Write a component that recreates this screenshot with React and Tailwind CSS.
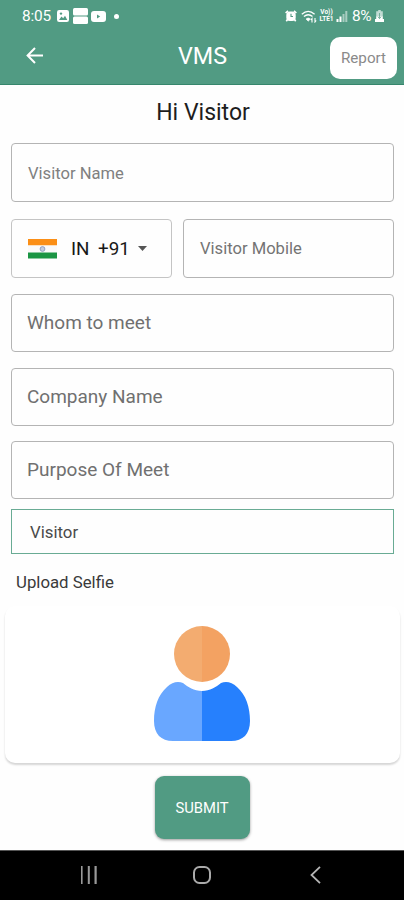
import React from "react";

const StatusBar = () => (
  <div className="flex h-8 items-center justify-between pl-[22px] pr-[20px] text-white">
    <div className="flex items-center">
      <span className="w-[35px] pt-px text-[15.4px] leading-none tracking-[-0.2px]">8:05</span>
      <svg width="12" height="12" viewBox="0 0 12 12">
        <rect width="12" height="12" rx="2.2" fill="#fff" />
        <path d="M2 10 L4.5 6.5 L6.2 8.3 L8 5.8 L10.3 10Z" fill="#519b83" />
        <circle cx="4" cy="3.6" r="1.2" fill="#519b83" />
      </svg>
      <svg className="ml-1" width="15" height="16" viewBox="0 0 15 16">
        <rect width="15" height="7.5" rx="1.5" fill="#fff" />
        <rect y="8.5" width="15" height="7.5" rx="1.5" fill="#fff" />
      </svg>
      <svg className="ml-[3px]" width="15" height="11" viewBox="0 0 15 11">
        <rect width="15" height="11" rx="3" fill="#fff" />
        <path d="M6 3.6 L9.2 5.5 L6 7.4Z" fill="#519b83" />
      </svg>
      <span className="ml-[8px] h-[5px] w-[5px] rounded-full bg-white" />
    </div>
    <div className="flex items-center">
      <svg width="12" height="12" viewBox="0 0 12 12">
        <rect x="1.3" y="1.6" width="9.4" height="9.4" rx="3.5" fill="#fff" />
        <path d="M0.6 3 L3 0.8 M11.4 3 L9 0.8 M2.5 9.5 L1.3 11.3 M9.5 9.5 L10.7 11.3" stroke="#fff" strokeWidth="1.6" />
        <path d="M6 3.8 V6.5 H8" fill="none" stroke="#519b83" strokeWidth="1.1" />
      </svg>
      <svg className="ml-1" width="16" height="13" viewBox="0 0 16 13" fill="none" stroke="#fff">
        <path d="M0.8 4.2 Q7.2 -1.4 13.6 4.2" strokeWidth="1.3" />
        <path d="M2.9 6.6 Q7.2 2.8 11.5 6.6" strokeWidth="1.3" />
        <path d="M5 9 Q7.2 7 9.4 9 L7.2 11.2Z" fill="#fff" strokeWidth="0.6" />
        <path d="M11 12.5 V8.5 L9.8 10 M14 8 V12 L15.2 10.5" strokeWidth="1.1" />
      </svg>
      <span className="ml-px flex w-[17px] flex-col items-center text-[6.5px] font-bold leading-[7px]">
        <span>Vo))</span>
        <span>LTE1</span>
      </span>
      <svg className="ml-px" width="12" height="11" viewBox="0 0 12 11" fill="#fff">
        <rect x="0.5" y="8" width="2" height="3" />
        <rect x="3.5" y="5.5" width="2" height="5.5" />
        <rect x="6.5" y="3" width="2" height="8" opacity="0.5" />
        <rect x="9.3" y="0" width="2" height="11" opacity="0.5" />
      </svg>
      <span className="ml-[4px] w-[22px] pt-px text-[15.4px] leading-none tracking-[-0.5px]">8%</span>
      <svg className="ml-px" width="9" height="12" viewBox="0 0 9 12">
        <path d="M3.2 0 H5.8 V1.3 H7.8 V6.5 H1.2 V1.3 H3.2Z" fill="#fff" opacity="0.65" />
        <path d="M1.2 6.3 H7.8 V9 H9 V12 H0 V9 H1.2Z" fill="#fff" />
        <path d="M4.5 3 V8.4 M2.9 6.8 L4.5 8.6 L6.1 6.8" fill="none" stroke="#519b83" strokeWidth="0.7" />
      </svg>
    </div>
  </div>
);

const Header = () => (
  <header className="h-[85px] border-b border-[#36866c] bg-[#519b83]">
    <StatusBar />
    <div className="grid grid-cols-[1fr_auto_1fr] items-start pl-[26px] pr-[7px] text-white">
      <button type="button" className="mt-[15px] w-[18px]">
        <svg width="18" height="17" viewBox="0 0 18 17" fill="none" stroke="#fff" strokeWidth="2">
          <path d="M17 8.5 H2 M9 1 L1.6 8.5 L9 16" />
        </svg>
      </button>
      <h1 className="mt-2 -translate-x-[9px] text-[23.3px] leading-8">VMS</h1>
      <button
        type="button"
        className="mt-[5px] h-[42px] w-[67px] justify-self-end rounded-[10px] bg-white pt-px text-[15.2px] text-[#8a8a8a]"
      >
        Report
      </button>
    </div>
  </header>
);

const Field = ({ label, className }) => (
  <div className={`flex items-center rounded-[4px] border border-[#b4b4b4] ${className}`}>{label}</div>
);

const CountryPicker = () => (
  <div className="flex h-[59px] w-[161px] items-center rounded-[4px] border border-[#c4c4c4] pl-4 text-[18.8px] text-[#171717]">
    <svg width="29" height="20" viewBox="0 0 29 20">
      <rect width="29" height="6.5" fill="#fb8f17" />
      <rect y="6.5" width="29" height="7" fill="#fafafa" />
      <rect y="13.5" width="29" height="6" fill="#1b9544" />
      <circle cx="14.5" cy="10" r="2.4" fill="#c4cde0" stroke="#8292b8" strokeWidth="0.8" />
    </svg>
    <span className="ml-[14px] w-[27px] pt-[2px]">IN</span>
    <span className="w-[32px] pt-[2px]">+91</span>
    <svg className="ml-[8px]" width="9" height="5" viewBox="0 0 9 5">
      <path d="M0 0 H9 L4.5 5Z" fill="#555" />
    </svg>
  </div>
);

const Avatar = () => (
  <svg className="-translate-x-px" width="98" height="118" viewBox="0 0 98 118">
    <path d="M49 1 A28 28 0 0 0 49 57Z" fill="#f3ac70" />
    <path d="M49 1 A28 28 0 0 1 49 57Z" fill="#f3a262" />
    <path d="M49 66 C41 66 35 62 30 58 C25 56 19 57 14 62 C5 70 1 82 1 96 C1 109 8 116 20 116 H49Z" fill="#69a7ff" />
    <path d="M49 66 C57 66 63 62 68 58 C73 56 79 57 84 62 C93 70 97 82 97 96 C97 109 90 116 78 116 H49Z" fill="#2680fd" />
  </svg>
);

const NavBar = () => (
  <nav className="flex h-[50px] items-center border-t border-[#555] bg-black pb-[2px]">
    <svg className="ml-[81px]" width="16" height="18" viewBox="0 0 16 18" fill="#999">
      <rect width="1.6" height="18" />
      <rect x="6.8" width="2" height="18" />
      <rect x="13.5" width="2.2" height="18" />
    </svg>
    <svg className="ml-[96px]" width="18" height="18" viewBox="0 0 18 18">
      <rect x="1" y="1" width="16" height="16" rx="5.5" fill="none" stroke="#aaa" strokeWidth="2" />
    </svg>
    <svg className="ml-[99px]" width="11" height="18" viewBox="0 0 11 18">
      <path d="M10 0.8 L1.5 9 L10 17.2" fill="none" stroke="#b5b5b5" strokeWidth="1.8" />
    </svg>
  </nav>
);

const App = () => {
  return (
    <div className="flex h-[900px] w-[404px] flex-col overflow-hidden bg-[#fefefe] font-['Roboto',sans-serif]">
      <Header />
      <main className="flex flex-1 flex-col">
        <h2 className="mt-3 pl-[2px] text-center text-[23px] leading-8 text-[#1d1d1d]">Hi Visitor</h2>
        <div className="mt-[14px] flex flex-col pl-[11px] pr-[10px]">
          <Field label="Visitor Name" className="h-[59px] pl-4 pt-[3px] text-[16.6px] text-[#808080]" />
          <div className="mt-[17px] flex gap-[11px]">
            <CountryPicker />
            <Field label="Visitor Mobile" className="h-[59px] flex-1 pl-4 pt-[2px] text-[16.6px] text-[#747474]" />
          </div>
          <Field label="Whom to meet" className="mt-4 h-[58px] pl-[15px] pt-px text-[19px] text-[#707070]" />
          <Field label="Company Name" className="mt-4 h-[58px] pl-[15px] text-[19px] text-[#707070]" />
          <Field label="Purpose Of Meet" className="mt-[15px] h-[58px] pl-[15px] pt-px text-[19px] text-[#707070]" />
          <div className="mt-[10px] flex h-[45px] items-center border border-[#69ab94] pl-[18px] pt-[2px] text-[16.8px] text-[#4a4a4a]">
            Visitor
          </div>
        </div>
        <p className="mt-4 pl-4 text-[16.8px] leading-6 text-[#3a3a3a]">Upload Selfie</p>
        <div className="ml-[5px] mr-1 mt-3 flex h-[157px] justify-center rounded-[10px] bg-white pt-[19px] shadow-[0_2px_2px_#d6d6d6]">
          <Avatar />
        </div>
        <button
          type="button"
          className="mt-[13px] h-[63px] w-[95px] self-center rounded-[9px] bg-[#519b83] pt-[2px] text-[14.8px] text-white shadow-[0_1px_3px_#999]"
        >
          SUBMIT
        </button>
      </main>
      <NavBar />
    </div>
  );
};

export default App;
